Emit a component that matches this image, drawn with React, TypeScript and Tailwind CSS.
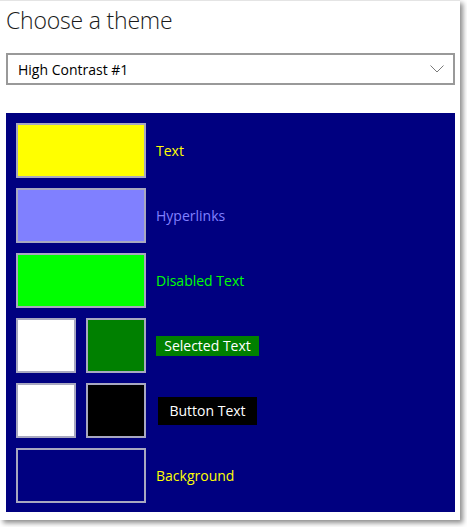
const font = { fontFamily: '"Open Sans", "Noto Sans", sans-serif' }

const Swatch = ({ color, wide = true }: { color: string; wide?: boolean }) => (
  <div
    className={`${wide ? 'w-[130px]' : 'w-[60px]'} h-[55px] border-2 border-[#a8a8c0] shrink-0`}
    style={{ backgroundColor: color }}
  />
)

export default function App() {
  return (
    <div className="w-[467px] h-[527px] bg-white" style={font}>
      <div className="w-[460px] h-[520px] bg-white border-t border-[#e4e4e4] shadow-[3px_3px_5px_rgba(0,0,0,0.45)] px-[6px]">
        {/* Header */}
        <div className="h-[52px] pt-[3px]">
          <h1 className="text-[23px] leading-[32px] font-light text-[#1a1a1a] tracking-[-0.2px]">Choose a theme</h1>
        </div>

        {/* Dropdown */}
        <div className="h-[32px] w-[449px] border-2 border-[#999999] flex items-center justify-between pl-[10px] pr-[9px]">
          <span className="text-[14px] text-black">High Contrast #1</span>
          <svg width="14" height="8" viewBox="0 0 14 8" fill="none">
            <path d="M0.5 0.5 L7 7 L13.5 0.5" stroke="#7a7a7a" strokeWidth="1" />
          </svg>
        </div>

        {/* Preview */}
        <div className="mt-[28px] w-[449px] h-[399px] bg-[#000080] p-[10px] flex flex-col gap-[10px]">
          <div className="flex items-center gap-[10px]">
            <Swatch color="#ffff00" />
            <span className="text-[14px] text-[#ffff00]">Text</span>
          </div>
          <div className="flex items-center gap-[10px]">
            <Swatch color="#8080ff" />
            <span className="text-[14px] text-[#8080ff]">Hyperlinks</span>
          </div>
          <div className="flex items-center gap-[10px]">
            <Swatch color="#00ff00" />
            <span className="text-[14px] text-[#00ff00]">Disabled Text</span>
          </div>
          <div className="flex items-center gap-[10px]">
            <Swatch color="#ffffff" wide={false} />
            <Swatch color="#008000" wide={false} />
            <span className="text-[14px] text-white bg-[#008000] h-[20px] leading-[20px] w-[103px] text-center">
              Selected Text
            </span>
          </div>
          <div className="flex items-center gap-[10px]">
            <Swatch color="#ffffff" wide={false} />
            <Swatch color="#000000" wide={false} />
            <span className="ml-[2px] text-[14px] text-white bg-black h-[28px] leading-[28px] w-[99px] text-center">
              Button Text
            </span>
          </div>
          <div className="flex items-center gap-[10px]">
            <Swatch color="#000080" />
            <span className="text-[14px] text-[#ffff00]">Background</span>
          </div>
        </div>
      </div>
    </div>
  )
}
